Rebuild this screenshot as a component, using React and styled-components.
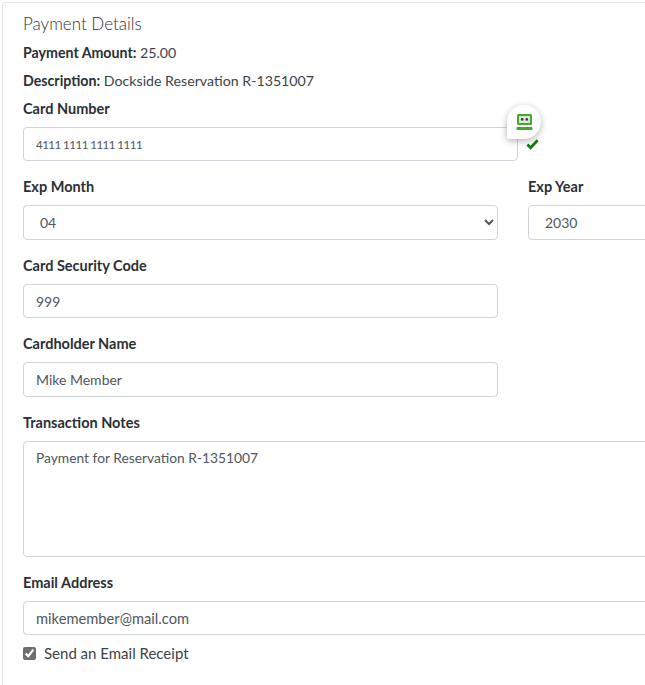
import React from 'react';
import styled, { createGlobalStyle } from 'styled-components';

const GlobalStyle = createGlobalStyle`
  html, body {
    margin: 0;
    padding: 0;
    background: #fff;
    overflow: hidden;
  }
  body {
    font-family: Lato, "Open Sans", sans-serif;
    color: #2b2f36;
  }
`;

const Page = styled.div`
  width: 645px;
  height: 685px;
  overflow: hidden;
`;

const Card = styled.div`
  box-sizing: border-box;
  width: 1000px;
  height: 700px;
  margin: 2px 0 0 2px;
  padding: 11px 20px 0;
  border: 1px solid #e4e4e4;
  border-radius: 3px;
`;

const Title = styled.h4`
  margin: 0 0 9px;
  font-size: 17px;
  line-height: 20px;
  font-weight: 300;
  color: #2f3338;
`;

const Info = styled.p`
  margin: 0 0 8px;
  font-size: 14.2px;
  line-height: 20px;
  color: #3d4248;
  b {
    font-weight: 700;
    color: #2b2f36;
  }
`;

const Label = styled.label`
  display: block;
  margin-bottom: 8px;
  font-size: 14.5px;
  line-height: 20px;
  font-weight: 700;
  color: #2b2f36;
`;

const Field = styled.div`
  position: relative;
  flex: none;
  width: ${p => p.$width || '475px'};
  margin-bottom: ${p => p.$gap || '16px'};
`;

const Row = styled.div`
  display: flex;
  gap: 30px;
  margin-bottom: 16px;
`;

const Input = styled.input`
  display: block;
  box-sizing: border-box;
  width: 100%;
  height: ${p => p.$height || '34px'};
  padding: 0 12px;
  font-family: inherit;
  font-size: ${p => p.$size || '14px'};
  color: #50565c;
  background: #fff;
  border: 1px solid #ced4da;
  border-radius: 4px;
  outline: none;
`;

const CardInput = styled(Input)`
  font-size: 11.5px;
  letter-spacing: -0.5px;
`;

const Select = styled.select`
  display: block;
  box-sizing: border-box;
  width: 100%;
  height: 35px;
  padding: 0 12px;
  font-family: inherit;
  font-size: 14px;
  color: #50565c;
  background: #fff;
  border: 1px solid #ced4da;
  border-radius: 4px;
  outline: none;
`;

const TextArea = styled.textarea`
  display: block;
  box-sizing: border-box;
  width: 100%;
  height: 116px;
  padding: 6px 12px;
  font-family: inherit;
  font-size: 13.8px;
  line-height: 20px;
  color: #50565c;
  background: #fff;
  border: 1px solid #ced4da;
  border-radius: 4px;
  outline: none;
  resize: none;
`;

const Check = styled.label`
  display: flex;
  align-items: center;
  gap: 8px;
  margin-top: 9px;
  font-size: 15px;
  line-height: 18px;
  color: #3d4248;
`;

const Box = styled.input`
  width: 13px;
  height: 13px;
  margin: 0;
  accent-color: #6f6f6f;
`;

const Bubble = styled.div`
  position: absolute;
  left: 484px;
  top: 6px;
  display: flex;
  align-items: center;
  justify-content: center;
  width: 34px;
  height: 34px;
  background: #fff;
  border-radius: 50% 50% 50% 2px;
  box-shadow: 0 2px 7px rgba(0, 0, 0, 0.3);
`;

const Valid = styled.svg`
  position: absolute;
  left: 503px;
  top: 39px;
`;

const RoboIcon = () => (
  <svg width="17" height="18" viewBox="0 0 17 18">
    <rect x="1" y="1" width="15" height="11" rx="1.5" fill="#43a92f" />
    <rect x="3" y="3" width="11" height="7" fill="#d9ead3" />
    <circle cx="6.2" cy="6.4" r="1.3" fill="#33413a" />
    <circle cx="10.8" cy="6.4" r="1.3" fill="#33413a" />
    <rect x="0.5" y="14" width="16" height="3" rx="1" fill="#43a92f" />
  </svg>
);

const App = () => (
  <Page>
    <GlobalStyle />
    <Card>
      <Title>Payment Details</Title>
      <Info><b>Payment Amount:</b> 25.00</Info>
      <Info><b>Description:</b> Dockside Reservation R-1351007</Info>

      <Field $width="495px">
        <Label>Card Number</Label>
        <CardInput readOnly value="4111 1111 1111 1111" />
        <Bubble><RoboIcon /></Bubble>
        <Valid width="13" height="12" viewBox="0 0 14 12">
          <path d="M1.5 6.5 L5 10 L12.5 2" fill="none" stroke="#0a7d0a" strokeWidth="3" />
        </Valid>
      </Field>

      <Row>
        <Field $gap="0">
          <Label>Exp Month</Label>
          <Select defaultValue="04"><option>04</option></Select>
        </Field>
        <Field $gap="0">
          <Label>Exp Year</Label>
          <Select defaultValue="2030"><option>2030</option></Select>
        </Field>
      </Row>

      <Field>
        <Label>Card Security Code</Label>
        <Input readOnly value="999" />
      </Field>
      <Field>
        <Label>Cardholder Name</Label>
        <Input readOnly value="Mike Member" $height="35px" />
      </Field>
      <Field $width="980px">
        <Label>Transaction Notes</Label>
        <TextArea readOnly value="Payment for Reservation R-1351007" />
      </Field>
      <Field $width="980px" $gap="0">
        <Label>Email Address</Label>
        <Input readOnly value="mikemember@mail.com" $size="14.7px" />
      </Field>
      <Check>
        <Box type="checkbox" readOnly checked />
        Send an Email Receipt
      </Check>
    </Card>
  </Page>
);

export default App;
